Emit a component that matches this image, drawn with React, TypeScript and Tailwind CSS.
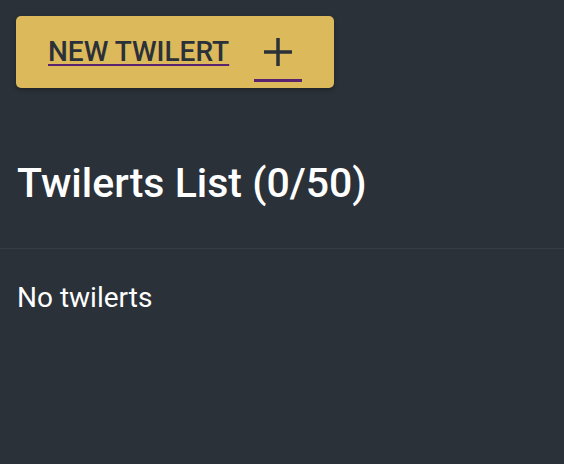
export default function App() {
  return (
    <div
      className="min-h-screen bg-[#2a3138] text-white"
      style={{ fontFamily: "Roboto, 'Liberation Sans', sans-serif" }}
    >
      <div className="p-4">
        <button className="flex h-[72px] w-[318px] items-center rounded-[5px] bg-[#dcb95b] pl-8 text-[#2a3138] shadow-[0_2px_4px_rgba(0,0,0,0.3)]">
          <span className="text-[28px] font-medium leading-none underline decoration-[#5a2370] decoration-2 underline-offset-[3px]">
            NEW TWILERT
          </span>
          <span className="ml-[25px] flex h-[44px] w-[48px] flex-col items-center justify-between self-start mt-[22px]">
            <svg width="28" height="28" viewBox="0 0 28 28">
              <path d="M14 0v28M0 14h28" stroke="#2a3138" strokeWidth="3.5" />
            </svg>
            <span className="h-[3px] w-full bg-[#5a2370]" />
          </span>
        </button>
      </div>
      <h1 className="mt-[59px] px-[17px] text-[41px] font-medium leading-none">
        Twilerts List (0/50)
      </h1>
      <div className="mt-[44px] h-px bg-[#363d44]" />
      <p className="mt-[35px] px-[17px] text-[28px] leading-none">No twilerts</p>
    </div>
  );
}
